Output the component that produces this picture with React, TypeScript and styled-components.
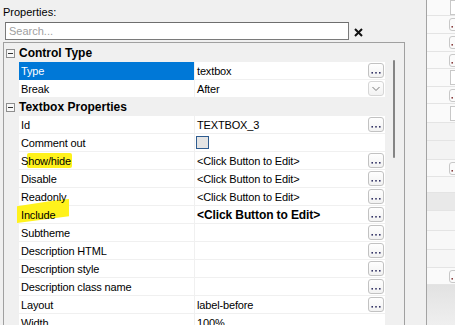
import React from 'react';
import styled, { createGlobalStyle } from 'styled-components';

const GlobalStyle = createGlobalStyle`
  html, body {
    margin: 0;
    padding: 0;
    background: #f0f0f0;
  }
  body {
    font-family: "Liberation Sans", Arial, sans-serif;
    font-size: 11px;
    color: #000;
  }
`;

type Control = 'dots' | 'drop' | 'check' | 'none';

type Row =
  | { kind: 'category'; label: string }
  | {
      kind: 'prop';
      name: string;
      value?: string;
      bold?: boolean;
      control: Control;
      selected?: boolean;
      mark?: 'flat' | 'slant';
    };

const rows: Row[] = [
  { kind: 'category', label: 'Control Type' },
  { kind: 'prop', name: 'Type', value: 'textbox', control: 'dots', selected: true },
  { kind: 'prop', name: 'Break', value: 'After', control: 'drop' },
  { kind: 'category', label: 'Textbox Properties' },
  { kind: 'prop', name: 'Id', value: 'TEXTBOX_3', control: 'dots' },
  { kind: 'prop', name: 'Comment out', control: 'check' },
  { kind: 'prop', name: 'Show/hide', value: '<Click Button to Edit>', control: 'dots', mark: 'flat' },
  { kind: 'prop', name: 'Disable', value: '<Click Button to Edit>', control: 'dots' },
  { kind: 'prop', name: 'Readonly', value: '<Click Button to Edit>', control: 'dots' },
  { kind: 'prop', name: 'Include', value: '<Click Button to Edit>', bold: true, control: 'dots', mark: 'slant' },
  { kind: 'prop', name: 'Subtheme', control: 'dots' },
  { kind: 'prop', name: 'Description HTML', control: 'dots' },
  { kind: 'prop', name: 'Description style', control: 'dots' },
  { kind: 'prop', name: 'Description class name', control: 'dots' },
  { kind: 'prop', name: 'Layout', value: 'label-before', control: 'dots' },
  { kind: 'prop', name: 'Width', value: '100%', control: 'none' },
];

// strips of the neighbouring panel that peeks in on the right
const strips: { h: number; tone: string; tail?: 'box' | 'dots' }[] = [
  { h: 16, tone: '#fafafa', tail: 'box' },
  { h: 18, tone: '#fafafa', tail: 'dots' },
  { h: 18, tone: '#fafafa', tail: 'dots' },
  { h: 17, tone: '#fafafa', tail: 'dots' },
  { h: 18, tone: '#fafafa', tail: 'box' },
  { h: 17, tone: '#fafafa', tail: 'dots' },
  { h: 19, tone: '#fafafa', tail: 'box' },
  { h: 18, tone: '#f3f3f3' },
  { h: 19, tone: '#f3f3f3' },
  { h: 17, tone: '#fafafa', tail: 'dots' },
  { h: 16, tone: '#f8f8f8' },
  { h: 18, tone: '#e9e9e9' },
  { h: 20, tone: '#f6f6f6' },
  { h: 19, tone: '#f8f8f8' },
  { h: 18, tone: '#f6f6f6' },
  { h: 17, tone: '#fafafa', tail: 'dots' },
];

const Dots: React.FC<{ color: string }> = ({ color }) => (
  <svg width="14" height="13" viewBox="0 0 14 13">
    <rect x="2.5" y="8" width="1.4" height="1.6" fill={color} />
    <rect x="6.3" y="8" width="1.4" height="1.6" fill={color} />
    <rect x="10.1" y="8" width="1.4" height="1.6" fill={color} />
  </svg>
);

const Chevron = () => (
  <svg width="14" height="13" viewBox="0 0 14 13">
    <path d="M3.5 5 L7 8.5 L10.5 5" fill="none" stroke="#7a7a7a" strokeWidth="1" />
  </svg>
);

const ClearIcon = () => (
  <svg width="9" height="9" viewBox="0 0 9 9">
    <path d="M1 1 L8 8 M8 1 L1 8" stroke="#111" strokeWidth="2" />
  </svg>
);

const MinusIcon = () => (
  <svg width="9" height="9" viewBox="0 0 9 9">
    <rect x="0.5" y="0.5" width="8" height="8" fill="#f7f7f7" stroke="#8e8e8e" />
    <path d="M2 4.5 H7" stroke="#333" strokeWidth="1" />
  </svg>
);

const renderControl = (control: Control) => {
  if (control === 'dots')
    return (
      <EditButton>
        <Dots color="#1d1d55" />
      </EditButton>
    );
  if (control === 'drop')
    return (
      <EditButton $light>
        <Chevron />
      </EditButton>
    );
  return null;
};

const App: React.FC = () => {
  return (
    <>
      <GlobalStyle />
      <Screen>
        <LeftPane>
          <Title>Properties:</Title>
          <SearchRow>
            <SearchInput placeholder="Search..." readOnly />
            <ClearButton>
              <ClearIcon />
            </ClearButton>
          </SearchRow>
          <Grid>
            <RowList>
              {rows.map((row, i) =>
                row.kind === 'category' ? (
                  <CategoryRow key={i}>
                    <Toggle>
                      <MinusIcon />
                    </Toggle>
                    <CategoryLabel>{row.label}</CategoryLabel>
                  </CategoryRow>
                ) : (
                  <PropRow key={i}>
                    <Gutter />
                    <NameCell $selected={row.selected}>
                      {row.mark && <Marker $shape={row.mark} />}
                      <Label>{row.name}</Label>
                    </NameCell>
                    <ValueCell>
                      {row.control === 'check' ? (
                        <Check />
                      ) : (
                        <Label $bold={row.bold}>{row.value}</Label>
                      )}
                      {renderControl(row.control)}
                    </ValueCell>
                  </PropRow>
                )
              )}
            </RowList>
            <ScrollTrack>
              <ScrollThumb />
            </ScrollTrack>
          </Grid>
        </LeftPane>
        <SidePanel>
          {strips.map((s, i) => (
            <Strip key={i} style={{ height: s.h, background: s.tone }}>
              {s.tail === 'box' && <StubBox />}
              {s.tail === 'dots' && (
                <StubButton>
                  <Dots color="#7c2b2b" />
                </StubButton>
              )}
            </Strip>
          ))}
          <SideFooter />
        </SidePanel>
      </Screen>
    </>
  );
};

export default App;

const Screen = styled.div`
  width: 455px;
  height: 325px;
  overflow: hidden;
  display: flex;
  background: #f0f0f0;
`;

const LeftPane = styled.div`
  width: 426px;
  flex: none;
  display: flex;
  flex-direction: column;
  padding-left: 3px;
  box-sizing: border-box;
`;

const Title = styled.div`
  height: 22px;
  padding-top: 5px;
  box-sizing: border-box;
  line-height: 14px;
  font-size: 11px;
`;

const SearchRow = styled.div`
  display: flex;
  align-items: center;
  height: 18px;
  margin-left: 2px;
`;

const SearchInput = styled.input`
  width: 344px;
  height: 18px;
  box-sizing: border-box;
  border: 1px solid #7a7a7a;
  border-top-color: #6e6e6e;
  background: #fff;
  padding: 0 3px;
  font-family: "Liberation Sans", Arial, sans-serif;
  font-size: 11px;
  outline: none;
  &::placeholder {
    color: #a0a0a0;
  }
`;

const ClearButton = styled.div`
  margin-left: 5px;
  margin-top: 2px;
  display: flex;
`;

const Grid = styled.div`
  margin-top: 2px;
  width: 402px;
  flex: 1;
  display: flex;
  box-sizing: border-box;
  border: 1px solid #a0a0a0;
  border-bottom: none;
  min-height: 0;
  overflow: hidden;
`;

const RowList = styled.div`
  width: 381px;
  flex: none;
  padding-top: 1px;
  display: flex;
  flex-direction: column;
`;

const CategoryRow = styled.div`
  height: 18px;
  flex: none;
  display: flex;
  align-items: center;
  background: #f0f0f0;
`;

const Toggle = styled.div`
  width: 15px;
  padding-left: 2px;
  box-sizing: border-box;
  display: flex;
`;

const CategoryLabel = styled.span`
  font-size: 12px;
  font-weight: bold;
  white-space: nowrap;
`;

const PropRow = styled.div`
  height: 18px;
  flex: none;
  display: flex;
  align-items: flex-start;
  background: #f0f0f0;
`;

const Gutter = styled.div`
  width: 15px;
  flex: none;
`;

const NameCell = styled.div<{ $selected?: boolean }>`
  position: relative;
  width: 175px;
  height: ${(p) => (p.$selected ? '18px' : '17px')};
  flex: none;
  display: flex;
  align-items: center;
  padding-left: 2px;
  box-sizing: border-box;
  background: ${(p) => (p.$selected ? '#0078d7' : '#fff')};
  color: ${(p) => (p.$selected ? '#fff' : '#000')};
  padding-bottom: ${(p) => (p.$selected ? '1px' : '0')};
`;

const Marker = styled.span<{ $shape: 'flat' | 'slant' }>`
  position: absolute;
  z-index: 1;
  background: #fff21c;
  ${(p) =>
    p.$shape === 'flat'
      ? `
    left: 8px;
    top: 1px;
    width: 45px;
    height: 15px;
    border-radius: 2px;
  `
      : `
    left: -2px;
    top: -7px;
    width: 52px;
    height: 24px;
    clip-path: polygon(0 30%, 78% 4%, 100% 0, 100% 72%, 0 100%);
  `}
`;

const Label = styled.span<{ $bold?: boolean }>`
  position: relative;
  z-index: 2;
  white-space: nowrap;
  font-size: ${(p) => (p.$bold ? '12px' : '11px')};
  font-weight: ${(p) => (p.$bold ? 'bold' : 'normal')};
  letter-spacing: ${(p) => (p.$bold ? '-0.1px' : '-0.15px')};
`;

const ValueCell = styled.div`
  width: 190px;
  height: 17px;
  margin-left: 1px;
  flex: none;
  display: flex;
  align-items: center;
  justify-content: space-between;
  padding: 0 1px 0 2px;
  box-sizing: border-box;
  background: #fff;
`;

const EditButton = styled.div<{ $light?: boolean }>`
  width: 16px;
  height: 15px;
  flex: none;
  margin-left: auto;
  box-sizing: border-box;
  border: 1px solid ${(p) => (p.$light ? '#d6d6d6' : '#c2c2c2')};
  border-radius: 3px;
  background: linear-gradient(#fefefe, #f2f2f2);
  display: flex;
  align-items: center;
  justify-content: center;
`;

const Check = styled.div`
  width: 13px;
  height: 13px;
  box-sizing: border-box;
  margin-left: -1px;
  border: 1px solid #2e5c90;
  background: #e4e4e4;
`;

const ScrollTrack = styled.div`
  width: 19px;
  flex: none;
  background: #f0f0f0;
  display: flex;
  justify-content: center;
  padding-top: 17px;
  box-sizing: border-box;
`;

const ScrollThumb = styled.div`
  width: 2px;
  height: 98px;
  margin-left: -1px;
  border-radius: 1px;
  background: #858585;
`;

const SidePanel = styled.div`
  width: 29px;
  flex: none;
  display: flex;
  flex-direction: column;
  border-left: 1px solid #a3a3a3;
  overflow: hidden;
`;

const Strip = styled.div`
  flex: none;
  display: flex;
  align-items: center;
  padding-left: 23px;
  box-sizing: border-box;
  border-bottom: 1px solid #e4e4e4;
`;

const StubBox = styled.div`
  width: 16px;
  height: 15px;
  flex: none;
  box-sizing: border-box;
  border: 1px solid #c8c8c8;
  background: #fff;
`;

const StubButton = styled.div`
  width: 16px;
  height: 13px;
  flex: none;
  box-sizing: border-box;
  border: 1px solid #c8c8c8;
  border-radius: 3px;
  background: #fbfbfb;
  display: flex;
  align-items: center;
  justify-content: flex-start;
  margin-left: -1px;
  & svg {
    margin-left: -1px;
  }
`;

const SideFooter = styled.div`
  flex: 1;
  background: linear-gradient(#e2e2e2, #efefef);
`;
